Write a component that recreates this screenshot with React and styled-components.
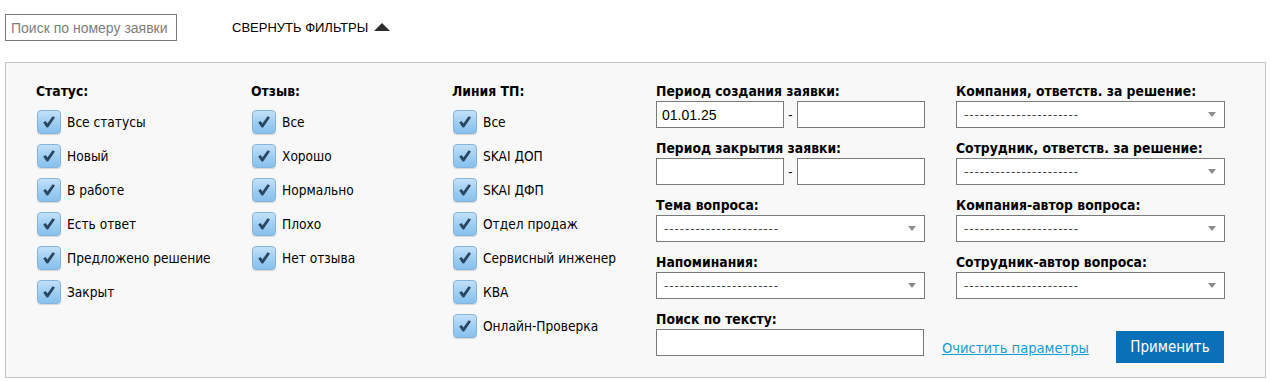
import React, { useState } from "react";
import styled, { createGlobalStyle } from "styled-components";

const GlobalStyle = createGlobalStyle`
  body {
    margin: 0;
    background: #ffffff;
    font-family: "DejaVu Sans Condensed", "DejaVu Sans", sans-serif;
    color: #000;
  }
`;

const statuses = ["Все статусы", "Новый", "В работе", "Есть ответ", "Предложено решение", "Закрыт"];
const reviews = ["Все", "Хорошо", "Нормально", "Плохо", "Нет отзыва"];
const lines = ["Все", "SKAI ДОП", "SKAI ДФП", "Отдел продаж", "Сервисный инженер", "КВА", "Онлайн-Проверка"];

function CheckItem({ label }) {
  const [checked, setChecked] = useState(true);
  return (
    <CheckRow onClick={() => setChecked(!checked)}>
      <CheckBox>
        {checked && (
          <svg width="16" height="16" viewBox="0 0 16 16">
            <path d="M2.2 8.4 L4.6 6.9 L6.4 9.6 L11.6 2.2 L14 3.6 L7.1 13.6 L5.6 13.6 Z" fill="#2b4761" />
          </svg>
        )}
      </CheckBox>
      <span>{label}</span>
    </CheckRow>
  );
}

function CheckColumn({ title, items }) {
  return (
    <Column>
      <ColumnTitle>{title}</ColumnTitle>
      <CheckList>
        {items.map((item) => (
          <CheckItem key={item} label={item} />
        ))}
      </CheckList>
    </Column>
  );
}

function Select() {
  return (
    <SelectBox>
      <Dashes>----------------------</Dashes>
      <Arrow />
    </SelectBox>
  );
}

function App() {
  return (
    <Page>
      <GlobalStyle />
      <TopBar>
        <SearchInput placeholder="Поиск по номеру заявки" />
        <Toggle>
          СВЕРНУТЬ ФИЛЬТРЫ <UpTriangle />
        </Toggle>
      </TopBar>
      <Panel>
        <CheckColumn title="Статус:" items={statuses} />
        <CheckColumn title="Отзыв:" items={reviews} />
        <CheckColumn title="Линия ТП:" items={lines} />
        <Column>
          <Field>
            <FieldLabel>Период создания заявки:</FieldLabel>
            <DateRow>
              <DateInput defaultValue="01.01.25" />
              <Dash>-</Dash>
              <DateInput />
            </DateRow>
          </Field>
          <Field>
            <FieldLabel>Период закрытия заявки:</FieldLabel>
            <DateRow>
              <DateInput />
              <Dash>-</Dash>
              <DateInput />
            </DateRow>
          </Field>
          <Field>
            <FieldLabel>Тема вопроса:</FieldLabel>
            <Select />
          </Field>
          <Field>
            <FieldLabel>Напоминания:</FieldLabel>
            <Select />
          </Field>
          <Field>
            <FieldLabel>Поиск по тексту:</FieldLabel>
            <TextInput />
          </Field>
        </Column>
        <Column>
          <Field>
            <FieldLabel>Компания, ответств. за решение:</FieldLabel>
            <Select />
          </Field>
          <Field>
            <FieldLabel>Сотрудник, ответств. за решение:</FieldLabel>
            <Select />
          </Field>
          <Field>
            <FieldLabel>Компания-автор вопроса:</FieldLabel>
            <Select />
          </Field>
          <Field>
            <FieldLabel>Сотрудник-автор вопроса:</FieldLabel>
            <Select />
          </Field>
          <Actions>
            <ClearLink href="#">Очистить параметры</ClearLink>
            <ApplyButton>Применить</ApplyButton>
          </Actions>
        </Column>
      </Panel>
    </Page>
  );
}

const Page = styled.div`
  padding: 14px 6px 3px 5px;
`;

const TopBar = styled.div`
  display: flex;
  align-items: center;
  height: 27px;
  margin-bottom: 21px;
`;

const SearchInput = styled.input`
  box-sizing: border-box;
  width: 172px;
  height: 27px;
  border: 1px solid #7a7a7a;
  padding: 0 5px;
  font-family: "Liberation Sans", Arial, sans-serif;
  font-size: 14px;
  outline: none;
  &::placeholder {
    color: #7d7d7d;
  }
`;

const Toggle = styled.div`
  margin-left: 55px;
  display: flex;
  align-items: center;
  gap: 6px;
  font-family: "Liberation Sans", Arial, sans-serif;
  font-size: 13px;
  color: #000;
  cursor: pointer;
`;

const UpTriangle = styled.span`
  width: 0;
  height: 0;
  border-left: 8px solid transparent;
  border-right: 8px solid transparent;
  border-bottom: 8px solid #2e2e2e;
  margin-top: -2px;
`;

const Panel = styled.div`
  box-sizing: border-box;
  width: 1261px;
  height: 316px;
  border: 1px solid #c4c4c4;
  background: #f8f8f8;
  padding: 20px 0 0 30px;
  display: grid;
  grid-template-columns: 215px 201px 204px 300px 268px;
  align-items: start;
`;

const Column = styled.div`
  display: flex;
  flex-direction: column;
`;

const ColumnTitle = styled.div`
  font-weight: bold;
  font-size: 13.8px;
  line-height: 16px;
  height: 16px;
  margin-bottom: 11px;
`;

const CheckList = styled.div`
  display: flex;
  flex-direction: column;
  gap: 10px;
`;

const CheckRow = styled.label`
  display: flex;
  align-items: center;
  gap: 6px;
  font-size: 13.6px;
  height: 24px;
  cursor: pointer;
  user-select: none;
`;

const CheckBox = styled.span`
  box-sizing: border-box;
  width: 24px;
  height: 24px;
  margin-left: 1px;
  border: 1px solid #86b4da;
  border-radius: 4px;
  background: linear-gradient(to bottom, #c3e1f8 0%, #9dcdf2 55%, #88c1ee 100%);
  box-shadow: 0 1px 1px rgba(0, 0, 0, 0.15);
  display: flex;
  align-items: center;
  justify-content: center;
`;

const Field = styled.div`
  display: flex;
  flex-direction: column;
  margin-bottom: 12px;
`;

const FieldLabel = styled.div`
  font-weight: bold;
  font-size: 13.8px;
  line-height: 16px;
  margin-bottom: 2px;
`;

const DateRow = styled.div`
  display: flex;
  align-items: center;
`;

const DateInput = styled.input`
  box-sizing: border-box;
  width: 128px;
  height: 27px;
  border: 1px solid #7a7a7a;
  background: #fff;
  padding: 0 5px;
  font-family: "Liberation Sans", Arial, sans-serif;
  font-size: 14px;
  outline: none;
`;

const Dash = styled.span`
  width: 13px;
  text-align: center;
  font-family: "Liberation Sans", Arial, sans-serif;
  font-size: 13px;
`;

const TextInput = styled.input`
  box-sizing: border-box;
  width: 268px;
  height: 27px;
  border: 1px solid #7a7a7a;
  background: #fff;
  outline: none;
`;

const SelectBox = styled.div`
  box-sizing: border-box;
  width: 269px;
  height: 27px;
  border: 1px solid #7a7a7a;
  background: #fff;
  display: flex;
  align-items: center;
  justify-content: space-between;
  padding: 0 8px 0 7px;
`;

const Dashes = styled.span`
  font-family: "DejaVu Sans", sans-serif;
  font-size: 12px;
  color: #444;
  letter-spacing: 0.9px;
`;

const Arrow = styled.span`
  width: 0;
  height: 0;
  border-left: 4px solid transparent;
  border-right: 4px solid transparent;
  border-top: 5px solid #8c8c8c;
`;

const Actions = styled.div`
  display: flex;
  align-items: center;
  justify-content: space-between;
  margin-left: -14px;
  width: 282px;
  margin-top: 20px;
`;

const ClearLink = styled.a`
  font-size: 14.6px;
  color: #1a9ad8;
  text-decoration: underline;
`;

const ApplyButton = styled.button`
  width: 108px;
  height: 32px;
  border: none;
  background: #0a71b9;
  color: #fff;
  font-family: "DejaVu Sans Condensed", "DejaVu Sans", sans-serif;
  font-size: 15px;
  cursor: pointer;
`;

export default App;
